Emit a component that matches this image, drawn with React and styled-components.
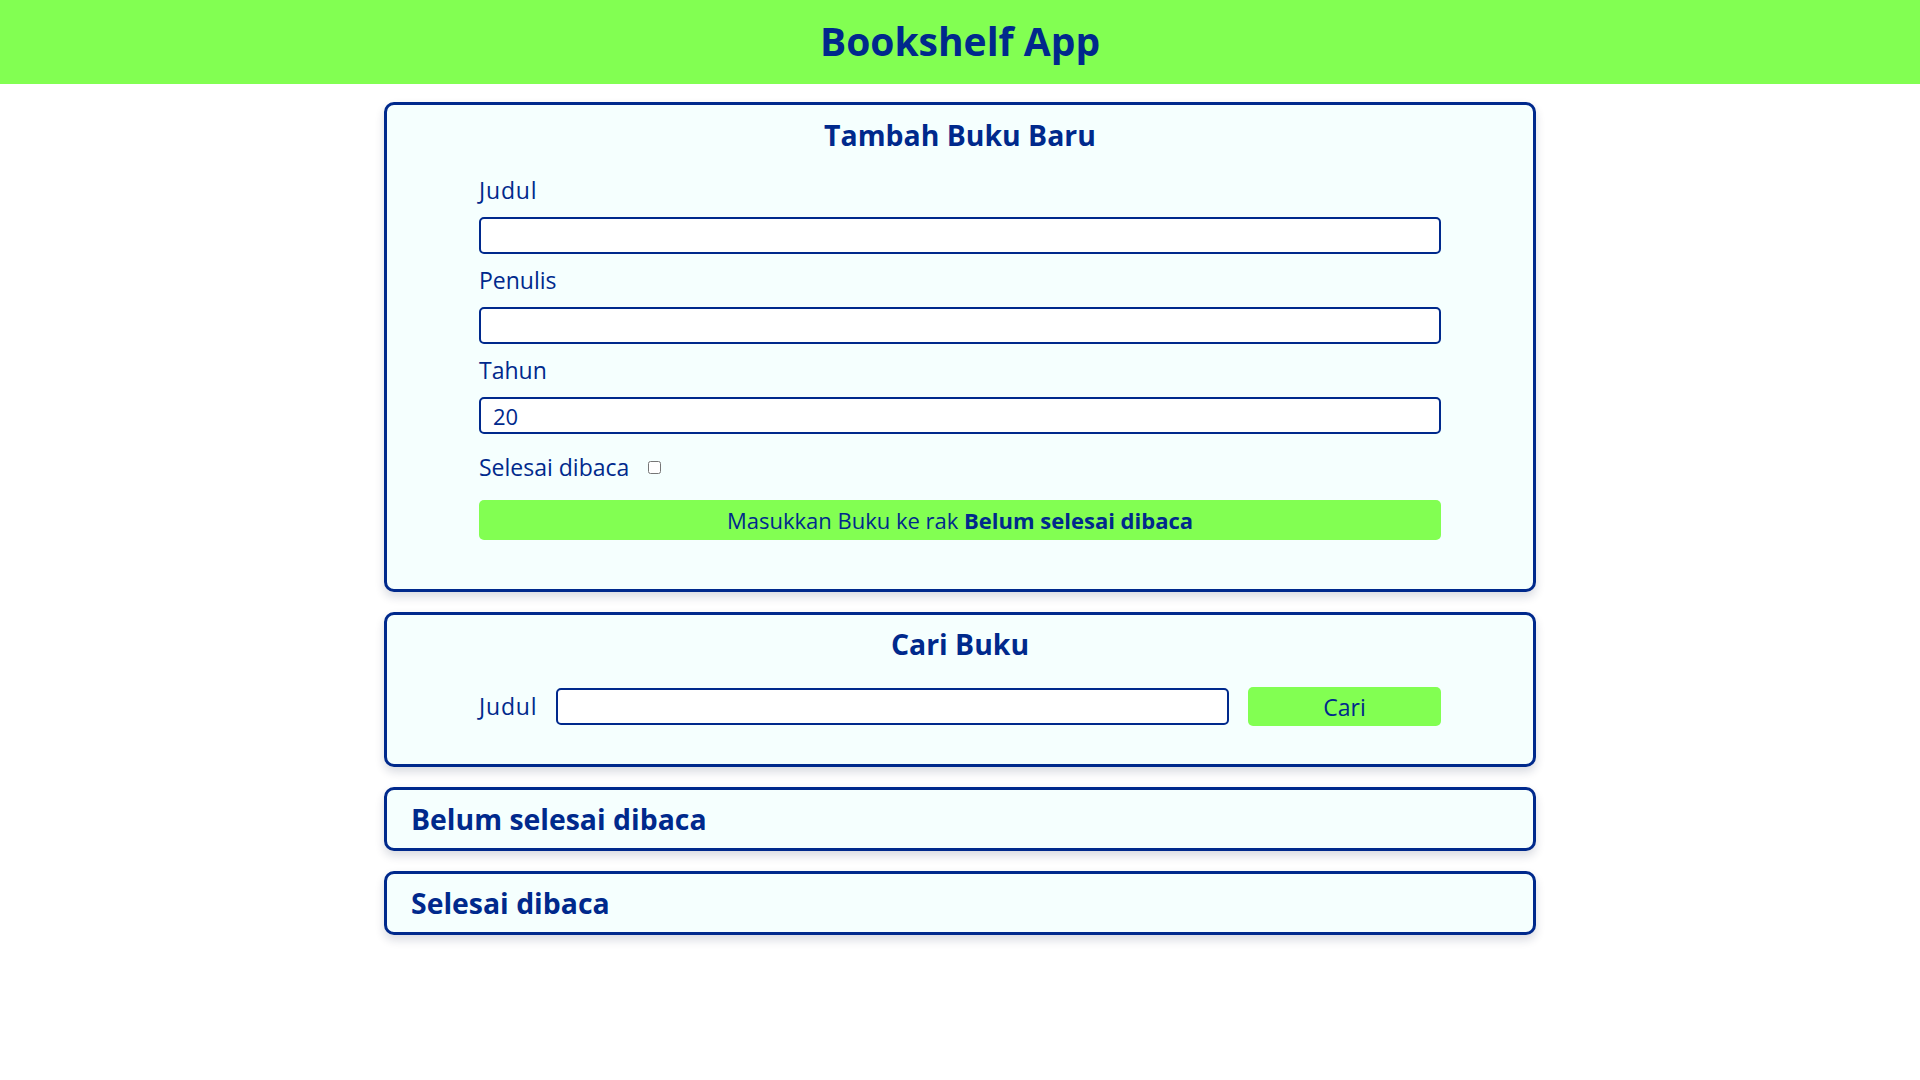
import React from "react";
import styled, { createGlobalStyle } from "styled-components";

const NAVY = "#00298c";
const GREEN = "#82ff52";
const CARD_BG = "#f5fffe";

const GlobalStyle = createGlobalStyle`
  * { box-sizing: border-box; }
  body {
    margin: 0;
    background: #ffffff;
    font-family: "Open Sans", "Noto Sans", sans-serif;
    color: ${NAVY};
  }
`;

const Header = styled.header`
  height: 84px;
  background: ${GREEN};
  display: flex;
  align-items: center;
  justify-content: center;
  padding-bottom: 4px;
`;

const AppTitle = styled.h1`
  margin: 0;
  font-size: 39px;
  font-weight: 700;
  line-height: 1;
  color: ${NAVY};
`;

const Main = styled.main`
  display: flex;
  flex-direction: column;
  align-items: center;
  gap: 20px;
  padding: 18px 0 40px;
`;

const Card = styled.section`
  width: 60%;
  background: ${CARD_BG};
  border: 3px solid ${NAVY};
  border-radius: 10px;
  box-shadow: 0 5px 10px rgba(20, 30, 70, 0.16);
  padding: ${(p) => p.$pad};
`;

const CardTitle = styled.h2`
  margin: 0;
  font-size: 28.4px;
  font-weight: 700;
  line-height: 36px;
  text-align: ${(p) => (p.$left ? "left" : "center")};
  color: ${NAVY};
`;

const Form = styled.form`
  display: flex;
  flex-direction: column;
  padding: 0 92px;
  margin-top: ${(p) => p.$top};
`;

const Field = styled.div`
  display: flex;
  flex-direction: column;
  gap: 13px;
  & + & {
    margin-top: 13px;
  }
`;

const Label = styled.label`
  font-size: 23px;
  line-height: 27px;
  color: ${NAVY};
  letter-spacing: ${(p) => p.$spacing || "normal"};
`;

const TextInput = styled.input`
  height: 37px;
  border: 2px solid ${NAVY};
  border-radius: 5px;
  background: #ffffff;
  padding: 0 12px;
  font-family: inherit;
  font-size: 22px;
  color: ${NAVY};
  outline: none;
  flex: ${(p) => (p.$grow ? 1 : "none")};
  width: ${(p) => (p.$grow ? "auto" : "100%")};
  min-width: 0;
`;

const CheckRow = styled.div`
  display: flex;
  align-items: center;
  margin-top: 20px;
  height: 27px;
`;

const Checkbox = styled.input`
  width: 13px;
  height: 13px;
  margin: 0 0 0 19px;
`;

const SubmitButton = styled.button`
  margin-top: 19px;
  height: 40px;
  border: none;
  border-radius: 5px;
  background: ${GREEN};
  color: ${NAVY};
  font-family: inherit;
  font-size: 22px;
  cursor: pointer;
  b {
    font-weight: 700;
  }
`;

const SearchRow = styled.form`
  display: flex;
  align-items: center;
  gap: 19px;
  padding: 0 92px;
  margin-top: 25px;
`;

const SearchButton = styled.button`
  width: 193px;
  height: 39px;
  border: none;
  border-radius: 5px;
  background: ${GREEN};
  color: ${NAVY};
  font-family: inherit;
  font-size: 23px;
  cursor: pointer;
`;

export default function App() {
  return (
    <>
      <GlobalStyle />
      <Header>
        <AppTitle>Bookshelf App</AppTitle>
      </Header>
      <Main>
        <Card $pad="12px 0 49px">
          <CardTitle>Tambah Buku Baru</CardTitle>
          <Form $top="24px" onSubmit={(e) => e.preventDefault()}>
            <Field>
              <Label htmlFor="inputBookTitle" $spacing="0.8px">Judul</Label>
              <TextInput id="inputBookTitle" type="text" />
            </Field>
            <Field>
              <Label htmlFor="inputBookAuthor">Penulis</Label>
              <TextInput id="inputBookAuthor" type="text" />
            </Field>
            <Field>
              <Label htmlFor="inputBookYear">Tahun</Label>
              <TextInput id="inputBookYear" type="text" defaultValue="20" />
            </Field>
            <CheckRow>
              <Label htmlFor="inputBookIsComplete">Selesai dibaca</Label>
              <Checkbox id="inputBookIsComplete" type="checkbox" />
            </CheckRow>
            <SubmitButton type="submit">
              Masukkan Buku ke rak <b>Belum selesai dibaca</b>
            </SubmitButton>
          </Form>
        </Card>

        <Card $pad="11px 0 38px">
          <CardTitle>Cari Buku</CardTitle>
          <SearchRow onSubmit={(e) => e.preventDefault()}>
            <Label htmlFor="searchBookTitle" $spacing="0.8px">Judul</Label>
            <TextInput id="searchBookTitle" type="text" $grow />
            <SearchButton type="submit">Cari</SearchButton>
          </SearchRow>
        </Card>

        <Card $pad="11px 24px">
          <CardTitle $left>Belum selesai dibaca</CardTitle>
        </Card>

        <Card $pad="11px 24px">
          <CardTitle $left>Selesai dibaca</CardTitle>
        </Card>
      </Main>
    </>
  );
}
